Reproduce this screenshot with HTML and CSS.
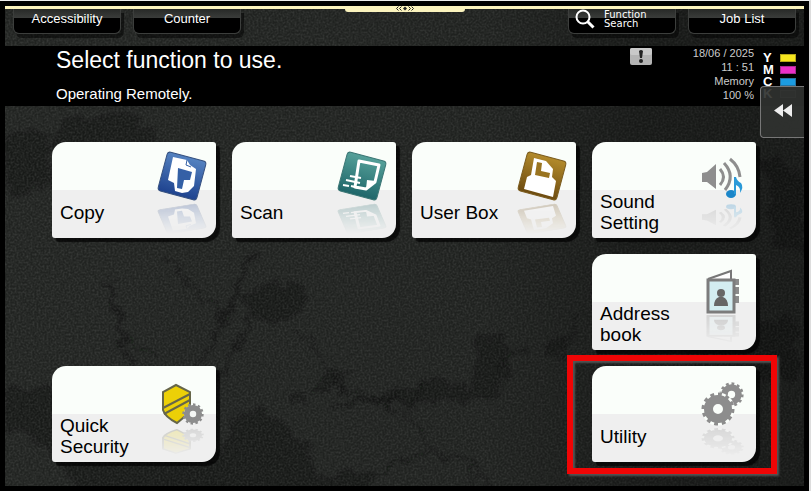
FILE: index.html
```html
<!DOCTYPE html>
<html lang="en">
<head>
  <meta charset="utf-8">
  <title>Remote Panel</title>
  <link rel="stylesheet" href="styles.css">
</head>
<body>

  <div class="panel">

    <!-- Stained wall behind everything -->
    <svg class="wall" viewBox="0 0 799 480" preserveAspectRatio="xMidYMid slice" aria-hidden="true">
      <defs>
        <filter id="grain" x="0" y="0" width="100%" height="100%">
          <feTurbulence type="fractalNoise" baseFrequency="0.5" numOctaves="3" seed="4"/>
          <feColorMatrix values="0 0 0 0 0.6  0 0 0 0 0.62  0 0 0 0 0.6  0.8 0 0 0 -0.28"/>
        </filter>
        <filter id="rough" x="-10%" y="-10%" width="120%" height="120%">
          <feTurbulence type="fractalNoise" baseFrequency="0.06" numOctaves="4" seed="8"/>
          <feDisplacementMap in="SourceGraphic" scale="22" xChannelSelector="R" yChannelSelector="G"/>
          <feGaussianBlur stdDeviation="1"/>
        </filter>
        <linearGradient id="shade" x1="0" y1="0" x2="1" y2="0">
          <stop offset="0" stop-color="#000" stop-opacity="0"/>
          <stop offset="0.6" stop-color="#000" stop-opacity="0.05"/>
          <stop offset="0.8" stop-color="#000" stop-opacity="0.3"/>
          <stop offset="1" stop-color="#000" stop-opacity="0.3"/>
        </linearGradient>
        <linearGradient id="fade" gradientUnits="userSpaceOnUse" x1="0" y1="60" x2="0" y2="92">
          <stop offset="0" stop-color="#fff" stop-opacity="0.25"/>
          <stop offset="1" stop-color="#fff" stop-opacity="0"/>
        </linearGradient>
        <mask id="mirror" maskUnits="userSpaceOnUse" x="100" y="56" width="64" height="40">
          <rect x="100" y="56" width="64" height="40" fill="url(#fade)"/>
        </mask>
        <linearGradient id="blue" x1="0" y1="0" x2="0" y2="1">
          <stop offset="0" stop-color="#5482c0"/>
          <stop offset="1" stop-color="#1f438f"/>
        </linearGradient>
        <linearGradient id="teal" x1="0" y1="0" x2="0" y2="1">
          <stop offset="0" stop-color="#55a099"/>
          <stop offset="1" stop-color="#1f666a"/>
        </linearGradient>
        <linearGradient id="brown" x1="0" y1="0" x2="0" y2="1">
          <stop offset="0" stop-color="#b28a2b"/>
          <stop offset="1" stop-color="#6d4b10"/>
        </linearGradient>
        <symbol id="gear" viewBox="-17 -17 34 34">
          <g fill="none" stroke="#8d8d8d">
            <circle r="9.5" stroke-width="9"/>
            <circle r="14.5" stroke-width="4" pathLength="24" stroke-dasharray="1 1"/>
          </g>
        </symbol>
      </defs>

      <g filter="url(#rough)" fill="#0d0f0d" opacity="0.4">
        <path d="M235 290 l30 -14 35 4 -4 26 -24 14 -22 -10z"/>
        <path d="M0 385 l44 -8 10 40 160 30 10 -28 30 -16 40 26 20 40 60 -5 -14 36 H90 L40 440 0 420z"/>
        <path d="M345 395 l40 -8 40 -14 40 10 8 -50 24 -6 10 44 -20 22 -50 2 -50 4z"/>
        <path d="M300 390 l20 -20 30 -8 -20 24z M535 336 l22 -6 8 16 -22 6z"/>
        <circle cx="487" cy="352" r="6"/>
        <circle cx="382" cy="400" r="4"/>
        <circle cx="295" cy="394" r="6"/>
        <path d="M60 110 h70 l30 34 H40z M0 130 l40 -10 8 60 -48 10z M680 330 l110 -20 v60 l-100 20z"/>
        <path d="M760 150 l39 20 v80 l-30 -10z"/>
      </g>
      <g filter="url(#rough)" fill="none" stroke="#0d0f0d" opacity="0.5">
        <path d="M103 272 L117 326 127 386" stroke-width="5"/>
        <path d="M252 246 L217 316 182 386" stroke-width="6"/>
        <path d="M247 306 L207 386" stroke-width="3"/>
        <path d="M117 331 l36 18 M160 254 l40 40 30 20" stroke-width="2"/>
        <path d="M292 321 L337 381 367 391 L407 418 437 450" stroke-width="2"/>
        <path d="M327 401 l50 -10 40 14 M407 406 l10 -34 M497 356 l24 -14 M577 306 l-20 50" stroke-width="3"/>
        <path d="M462 455 l6 30 M377 466 l40 -20 40 4 30 30" stroke-width="2"/>
      </g>
      <rect width="799" height="480" filter="url(#grain)" opacity="0.34"/>
      <rect width="799" height="480" fill="url(#shade)"/>
    </svg>

    <div class="drag-bar">
      <div class="drag-handle">
        <svg width="18" height="5" viewBox="0 0 18 5" fill="none" stroke="#222">
          <path d="M2.500 .5 l-2 2 2 2 M5.500 .5 l-2 2 2 2 M12.500 .5 l2 2 -2 2 M15.500 .5 l2 2 -2 2"/>
          <path d="M9 0.500 l2 2 -2 2 -2 -2z" fill="#222" stroke="none"/>
        </svg>
      </div>
    </div>

    <nav class="top-bar">
      <button class="top-button">Accessibility</button>
      <button class="top-button">Counter</button>
      <button class="top-button search-button">
        <svg width="20" height="20" viewBox="0 0 20 20" fill="none" stroke="#fff">
          <circle cx="8" cy="8" r="6.500" stroke-width="2"/>
          <path d="M12.500 12.500 L18.500 18.500" stroke-width="3"/>
        </svg>
        <span>Function<br>Search</span>
      </button>
      <button class="top-button">Job List</button>
    </nav>

    <header class="status">
      <div class="message">
        <h1>Select function to use.</h1>
        <p>Operating Remotely.</p>
      </div>
      <svg class="warning" width="22" height="17" viewBox="0 0 22 17" role="img" aria-label="Warning">
        <rect width="22" height="17" rx="2" fill="#b4b4b4"/>
        <rect width="22" height="7" rx="2" fill="#c9c9c9"/>
        <path d="M9 3 q2 -2 4 0 l-1 7 h-2z" fill="#222"/>
        <circle cx="11" cy="13" r="2" fill="#222"/>
      </svg>
      <div class="info">
        <div>18/06 / 2025</div>
        <div>11 : 51</div>
        <div>Memory</div>
        <div>100 %</div>
      </div>
      <ul class="toner">
        <li>Y<span class="swatch yellow"></span></li>
        <li>M<span class="swatch magenta"></span></li>
        <li>C<span class="swatch cyan"></span></li>
        <li>K<span class="swatch black"></span></li>
      </ul>
    </header>

    <button class="side-tab" aria-label="Open side menu">
      <svg width="18" height="13" viewBox="0 0 18 13" fill="#eee">
        <path d="M9 0 V13 L0 6.500z M18 0 V13 L9 6.500z"/>
      </svg>
    </button>

    <main class="functions">

      <button class="card">
        <span class="label">Copy</span>
        <svg class="icon" viewBox="104 0 56 96">
          <g id="copy">
            <rect x="110" y="14" width="40" height="40" rx="3" fill="url(#blue)" stroke="#35507f" transform="rotate(15 130 34)"/>
            <path d="M121 15 L135 18 138 23 144 27 142 44 136 50 130 51 123 49 122 41 116 38z" fill="#fff"/>
            <path d="M126 26 L140 30 138 38 132 38 130 47 125 46z" fill="#3560a6"/>
            <path d="M135 18 l-1 5 5 2" fill="none" stroke="#3560a6"/>
          </g>
          <g mask="url(#mirror)"><use href="#copy" transform="translate(0 98) scale(1 -.62)"/></g>
        </svg>
      </button>

      <button class="card">
        <span class="label">Scan</span>
        <svg class="icon" viewBox="104 0 56 96">
          <g id="scan">
            <rect x="110" y="14" width="40" height="40" rx="3" fill="url(#teal)" stroke="#3b7674" transform="rotate(15 130 34)"/>
            <path d="M127 19 L147 23 143 40 134 47 123 45z" fill="none" stroke="#fff" stroke-width="3" stroke-linejoin="round"/>
            <path d="M134 47 l1 -9 9 1z" fill="#fff"/>
            <path d="M118 34 l11 2 M114 38 l14 3 M111 43 l6 1 M119 44 l8 2" stroke="#fff" stroke-width="2"/>
          </g>
          <g mask="url(#mirror)"><use href="#scan" transform="translate(0 98) scale(1 -.62)"/></g>
        </svg>
      </button>

      <button class="card">
        <span class="label">User Box</span>
        <svg class="icon" viewBox="104 0 56 96">
          <g id="userbox">
            <rect x="110" y="14" width="40" height="40" rx="3" fill="url(#brown)" stroke="#7b5c1e" transform="rotate(15 130 34)"/>
            <path d="M122 16 L134 19 141 27 140 35 144 39 141 55 112 47 115 35 119 33z" fill="#fff"/>
            <path d="M125 20 L130 21 129 29 138 31 137 36 123 33z" fill="#9a7420"/>
          </g>
          <g mask="url(#mirror)"><use href="#userbox" transform="translate(0 98) scale(1 -.62)"/></g>
        </svg>
      </button>

      <button class="card">
        <span class="label">Sound<br>Setting</span>
        <svg class="icon" viewBox="104 0 56 96">
          <g id="sound">
            <path d="M110 31 L115 30 124 22 V47 L115 40 H110z" fill="#8e8e8e"/>
            <path d="M128 27 q7 8 0 16 M132 21 q12 13 1 27 M138 17 q9 7 10 18" fill="none" stroke="#8e8e8e" stroke-width="3"/>
            <ellipse cx="139" cy="52" rx="5" ry="4" fill="#1b86c9"/>
            <path d="M142 35 h2 q1 4 5 6 q3 4 -1 10 q1 -6 -4 -8 V52 h-2z" fill="#2a9ad8"/>
          </g>
          <g mask="url(#mirror)"><use href="#sound" transform="translate(0 97) scale(1 -.62)"/></g>
        </svg>
      </button>

      <button class="card address">
        <span class="label">Address<br>book</span>
        <svg class="icon" viewBox="104 0 56 96">
          <g id="book">
            <path d="M116 25 L139 17 V26" fill="#fff" stroke="#777" stroke-width="2"/>
            <path d="M143 25 h4 v6 h-4z M143 33 h4 v7 h-4z M143 42 h4 v7 h-4z" fill="#8b8b8b"/>
            <rect x="116" y="26" width="26" height="32" fill="#d3edf1" stroke="#7c7c7c" stroke-width="3"/>
            <circle cx="129" cy="39" r="4" fill="#666"/>
            <path d="M122 52 q0 -7 5 -9 h4 q5 2 5 9z" fill="#666"/>
          </g>
          <g mask="url(#mirror)"><use href="#book" transform="translate(0 98) scale(1 -.62)"/></g>
        </svg>
      </button>

      <button class="card security">
        <span class="label">Quick<br>Security</span>
        <svg class="icon" viewBox="104 0 56 96">
          <g id="shield">
            <path d="M124 19 L138 26 V46 L125 57 Q113 51 111 44 V26z" fill="#ecd007" stroke="#66664a" stroke-width="2"/>
            <path d="M111 42 L138 28 M112 48 L138 34" stroke="#66664a" stroke-width="2"/>
            <circle cx="141" cy="48" r="9" fill="#f4f6f4"/>
            <use href="#gear" x="130" y="37" width="22" height="22"/>
          </g>
          <g mask="url(#mirror)"><use href="#shield" transform="translate(0 99) scale(1 -.62)"/></g>
        </svg>
      </button>

      <button class="card utility">
        <span class="label">Utility</span>
        <svg class="icon" viewBox="104 0 56 96">
          <g id="gears">
            <use href="#gear" x="127" y="16" width="25" height="25"/>
            <circle cx="126" cy="43" r="15" fill="none" stroke="#fbfffb" stroke-width="3"/>
            <use href="#gear" x="109" y="26" width="34" height="34"/>
          </g>
          <g mask="url(#mirror)"><use href="#gears" transform="translate(0 99) scale(1 -.62)"/></g>
        </svg>
      </button>

    </main>
  </div>

</body>
</html>
```
FILE: styles.css
```css
* {
  box-sizing: border-box;
}

body {
  margin: 0;
  min-height: 100vh;
  padding: 5px;
  display: flex;
  background: black;
  border-top: 1px solid #eee;
  border-right: 2px solid #ddd;
  font-family: "Liberation Sans", Arial, sans-serif;
}

button {
  border: none;
  font-family: inherit;
  cursor: pointer;
}

.panel {
  position: relative;
  flex: 1;
  background: #212321;
}

.wall {
  position: absolute;
  top: 0;
  left: 0;
  width: 100%;
  height: 100%;
}

/* top strip */
.drag-bar {
  position: relative;
  z-index: 1;
  height: 3px;
  background: #fbf3bd;
}

.drag-handle {
  position: absolute;
  top: 0;
  left: 50%;
  width: 120px;
  height: 6px;
  margin-left: -60px;
  background: #fbf3bd;
  border-radius: 0 0 3px 3px;
  display: flex;
  justify-content: center;
}

.top-bar {
  position: relative;
  display: flex;
  align-items: flex-start;
  gap: 12px;
  height: 37px;
  padding: 0 8px;
}

.top-button {
  width: 108px;
  height: 25px;
  padding: 0 0 5px;
  background: linear-gradient(#272927, #3a3c3a 9px, black 9px);
  border: 1px solid #3c3e3c;
  border-top: none;
  border-radius: 0 0 6px 6px;
  box-shadow: 3px 4px 0 rgba(0, 0, 0, 0.5);
  color: white;
  font-size: 13px;
}

.search-button {
  margin-left: auto;
  display: flex;
  align-items: center;
  gap: 9px;
  padding: 0 0 5px 6px;
  font-family: "DejaVu Sans", sans-serif;
  font-size: 10px;
  line-height: 9px;
  text-align: left;
}

/* status area */
.status {
  position: relative;
  display: flex;
  height: 60px;
  padding: 0 8px 0 51px;
  background: black;
  color: white;
}

.message {
  flex: 1;
}

h1 {
  margin: 0;
  font-size: 23px;
  font-weight: normal;
  line-height: 28px;
}

.message p {
  margin: 10px 0 0;
  font-size: 15px;
  line-height: 20px;
}

.warning {
  margin-top: 2px;
}

.info {
  width: 102px;
  color: #ccc;
  font-size: 11px;
  line-height: 14px;
  text-align: right;
}

.toner {
  width: 33px;
  margin: 6px 0 0 9px;
  padding: 0;
  list-style: none;
  font-size: 13px;
  font-weight: bold;
  line-height: 12px;
}

.toner li {
  display: flex;
  align-items: center;
  justify-content: space-between;
  height: 12px;
}

.swatch {
  width: 16px;
  height: 8px;
  border: 1px solid;
}

.yellow {
  background: #f6e61e;
  border-color: #b5a71a;
}

.magenta {
  background: #ea2fc8;
  border-color: #a82a92;
}

.cyan {
  background: #1b9be0;
  border-color: #2273a3;
}

.black {
  background: #222;
  border-color: #444;
}

.side-tab {
  position: absolute;
  top: 80px;
  right: 0;
  z-index: 1;
  width: 44px;
  height: 52px;
  padding: 0;
  background: rgba(48, 50, 48, 0.92);
  border: 1px solid #777;
  border-right: none;
  border-radius: 4px 0 0 4px;
}

/* function buttons */
.functions {
  position: relative;
  display: grid;
  grid-template-columns: repeat(4, 1fr);
  gap: 16px;
  padding: 36px 48px 24px 47px;
}

.card {
  position: relative;
  display: flex;
  justify-content: space-between;
  height: 96px;
  padding: 0 4px 0 8px;
  background: linear-gradient(#fafefa 48px, #efefef 48px);
  border-radius: 14px 3px 14px 3px;
  box-shadow: 4px 4px 1px rgba(0, 0, 0, 0.7);
  color: black;
  font-size: 19px;
  line-height: 21px;
  text-align: left;
}

.label {
  align-self: flex-end;
  display: flex;
  align-items: center;
  height: 52px;
  white-space: nowrap;
}

.icon {
  flex: none;
  width: 56px;
  height: 96px;
  margin-left: -20px;
}

.address {
  grid-column: 4;
}

.security {
  grid-column: 1;
}

.utility {
  grid-column: 4;
}

/* red marker round the utility button */
.utility::after {
  content: "";
  position: absolute;
  top: -11px;
  right: -21px;
  bottom: -12px;
  left: -25px;
  border: 6px solid #f00505;
  box-shadow: 2px 2px 2px #555, inset 2px 2px 2px #555;
}
```
